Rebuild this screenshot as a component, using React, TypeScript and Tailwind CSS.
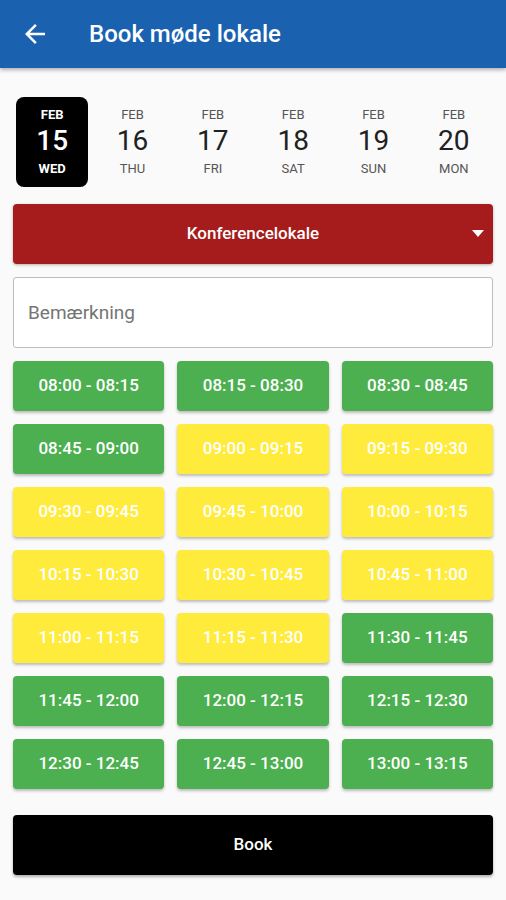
import React, { useState } from "react";

const DAYS = [
  { m: "FEB", d: "15", w: "WED" },
  { m: "FEB", d: "16", w: "THU" },
  { m: "FEB", d: "17", w: "FRI" },
  { m: "FEB", d: "18", w: "SAT" },
  { m: "FEB", d: "19", w: "SUN" },
  { m: "FEB", d: "20", w: "MON" },
];

// g = ledig, y = optaget
const SLOTS: [string, "g" | "y"][] = [
  ["08:00 - 08:15", "g"],
  ["08:15 - 08:30", "g"],
  ["08:30 - 08:45", "g"],
  ["08:45 - 09:00", "g"],
  ["09:00 - 09:15", "y"],
  ["09:15 - 09:30", "y"],
  ["09:30 - 09:45", "y"],
  ["09:45 - 10:00", "y"],
  ["10:00 - 10:15", "y"],
  ["10:15 - 10:30", "y"],
  ["10:30 - 10:45", "y"],
  ["10:45 - 11:00", "y"],
  ["11:00 - 11:15", "y"],
  ["11:15 - 11:30", "y"],
  ["11:30 - 11:45", "g"],
  ["11:45 - 12:00", "g"],
  ["12:00 - 12:15", "g"],
  ["12:15 - 12:30", "g"],
  ["12:30 - 12:45", "g"],
  ["12:45 - 13:00", "g"],
  ["13:00 - 13:15", "g"],
];

export default function App() {
  const [day, setDay] = useState(0);
  const [note, setNote] = useState("");

  return (
    <div className="min-h-[900px] w-[506px] bg-[#fafafa] font-['Roboto',sans-serif]">
      <header className="flex h-[68px] items-center bg-[#1a62b0] shadow-[0_2px_4px_rgba(0,0,0,0.3)]">
        <button className="ml-[20px] flex h-[30px] w-[30px] items-center justify-center text-white">
          <svg width="30" height="30" viewBox="0 0 24 24" fill="currentColor">
            <path d="M20 11H7.83l5.59-5.59L12 4l-8 8 8 8 1.41-1.41L7.83 13H20v-2z" />
          </svg>
        </button>
        <h1 className="ml-[39px] text-[24px] font-medium text-white">Book møde lokale</h1>
      </header>

      <div className="mx-[12px] mt-[29px] grid grid-cols-6">
        {DAYS.map((x, i) => {
          const sel = i === day;
          return (
            <button
              key={x.d}
              onClick={() => setDay(i)}
              className={
                sel
                  ? "mx-[4px] flex h-[90px] flex-col items-center justify-center rounded-[8px] bg-black text-white"
                  : "mx-[4px] flex h-[90px] flex-col items-center justify-center text-[#212121]"
              }
            >
              <span className={sel ? "text-[13px] font-bold leading-[14px]" : "text-[13px] leading-[14px] text-[#555]"}>
                {x.m}
              </span>
              <span className={sel ? "mt-[3px] text-[28px] font-medium leading-[32px]" : "mt-[3px] text-[28px] leading-[32px]"}>
                {x.d}
              </span>
              <span className={sel ? "mt-[5px] text-[13px] font-bold leading-[14px]" : "mt-[5px] text-[13px] leading-[14px] text-[#555]"}>
                {x.w}
              </span>
            </button>
          );
        })}
      </div>

      <div className="mx-[13px] mt-[17px]">
        <button className="relative flex h-[60px] w-full items-center justify-center rounded-[4px] bg-[#a61b1b] shadow-[0_1px_3px_rgba(0,0,0,0.3)]">
          <span className="text-[17px] font-medium text-white">Konferencelokale</span>
          <svg className="absolute right-[9px] top-[26px]" width="12" height="7" viewBox="0 0 12 7" fill="white">
            <path d="M0 0h12L6 7z" />
          </svg>
        </button>

        <input
          value={note}
          onChange={(e) => setNote(e.target.value)}
          placeholder="Bemærkning"
          className="mt-[13px] h-[71px] w-full rounded-[3px] border border-[#bdbdbd] bg-white px-[14px] text-[19px] text-[#212121] outline-none placeholder:text-[#757575]"
        />

        <div className="mt-[13px] grid grid-cols-3 gap-x-[13px] gap-y-[13px]">
          {SLOTS.map(([t, c]) => (
            <button
              key={t}
              className={
                c === "g"
                  ? "h-[50px] rounded-[4px] bg-[#4caf50] text-[17px] font-medium text-white shadow-[0_2px_3px_rgba(0,0,0,0.25)]"
                  : "h-[50px] rounded-[4px] bg-[#ffeb3b] text-[17px] font-medium text-white shadow-[0_2px_3px_rgba(0,0,0,0.25)]"
              }
            >
              {t}
            </button>
          ))}
        </div>

        <button className="mt-[26px] h-[60px] w-full rounded-[4px] bg-black text-[17px] font-medium text-white shadow-[0_2px_3px_rgba(0,0,0,0.3)]">
          Book
        </button>
      </div>
    </div>
  );
}
